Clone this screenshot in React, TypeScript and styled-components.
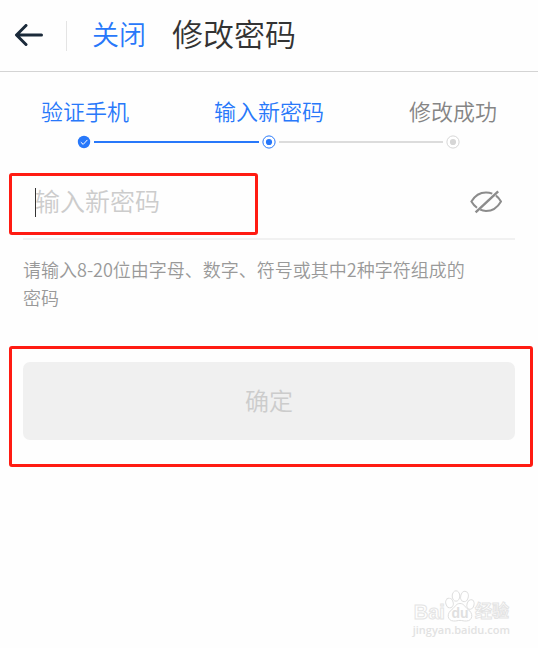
import React, { useState } from "react";
import styled, { createGlobalStyle } from "styled-components";

const BLUE = "#2878fa";

const GlobalStyle = createGlobalStyle`
  *, *::before, *::after { box-sizing: border-box; }
  body {
    margin: 0;
    background: #fefefe;
    font-family: Roboto, "Noto Sans CJK SC", sans-serif;
    font-weight: 350;
  }
  button, input { font: inherit; }
`;

const Page = styled.div`
  min-height: 100vh;
  display: flex;
  flex-direction: column;
`;

const Header = styled.header`
  display: flex;
  align-items: center;
  height: 72px;
  padding-left: 14px;
  border-bottom: 1px solid #d4d4d4;
`;

const PlainButton = styled.button`
  display: flex;
  padding: 0;
  border: 0;
  background: none;
  cursor: pointer;
`;

const Divider = styled.span`
  width: 1px;
  height: 30px;
  margin: 0 25px 0 22px;
  background: #e4e4e4;
`;

const CloseButton = styled(PlainButton)`
  color: ${BLUE};
  font-size: 27px;
  line-height: 40px;
`;

const Title = styled.h1`
  margin: 0 0 0 26px;
  color: #333;
  font-size: 31px;
  font-weight: 350;
  line-height: 40px;
`;

const Labels = styled.ol`
  display: flex;
  justify-content: space-between;
  margin: 0;
  padding: 25px 41px 0;
  list-style: none;
`;

const Label = styled.li<{ $active: boolean }>`
  color: ${(p) => (p.$active ? BLUE : "#858585")};
  font-size: 22px;
  line-height: 32px;
`;

const Track = styled.div`
  display: flex;
  align-items: center;
  gap: 3px;
  padding: 6px 78px 0 77px;
`;

const Line = styled.span<{ $active: boolean }>`
  flex: 1;
  height: 2px;
  background: ${(p) => (p.$active ? BLUE : "#dcdcdc")};
`;

const Form = styled.form`
  display: flex;
  flex-direction: column;
  padding: 24px 23px 0;
`;

const Field = styled.div`
  display: flex;
  align-items: center;
  justify-content: space-between;
  height: 67px;
  padding: 0 13px 7px 12px;
  border-bottom: 2px solid #f1f1f1;
`;

const InputWrap = styled.div`
  position: relative;
  flex: 1;
  display: flex;
  align-items: center;
`;

const Caret = styled.span`
  position: absolute;
  left: 0;
  width: 1px;
  height: 29px;
  background: #333;
`;

const Input = styled.input`
  width: 100%;
  height: 40px;
  padding: 0;
  border: 0;
  outline: 0;
  background: transparent;
  color: #333;
  font-size: 25px;
  caret-color: transparent;
  &::placeholder { color: #ccc; opacity: 1; }
  &:not(:placeholder-shown) { caret-color: #333; }
`;

const Outline = styled.span`
  position: absolute;
  border: 3px solid #ff1b12;
  border-radius: 3px;
  pointer-events: none;
`;

const FieldOutline = styled(Outline)`
  top: -9px;
  bottom: -13px;
  left: -26px;
  width: 249px;
`;

const SubmitOutline = styled(Outline)`
  inset: -16px -18px -27px -14px;
`;

const Hint = styled.p`
  margin: 15px 0 0;
  padding-right: 40px;
  color: #999;
  font-family: "Noto Sans CJK SC", sans-serif;
  font-size: 18px;
  line-height: 28px;
`;

const SubmitArea = styled.div`
  position: relative;
  display: flex;
  margin-top: 51px;
`;

const Submit = styled.button`
  flex: 1;
  height: 78px;
  padding: 0 0 4px;
  border: 0;
  border-radius: 7px;
  background: #f0f0f0;
  color: #ccc;
  font-size: 24px;
`;

const Watermark = styled.footer`
  display: flex;
  flex-direction: column;
  align-items: center;
  align-self: flex-end;
  margin: auto 28px 10px 0;
  color: #fff;
  font-family: "Liberation Sans", "Noto Sans CJK SC", sans-serif;
  font-weight: 700;
  -webkit-text-stroke: 1px #e4e4e4;
`;

const Brand = styled.div`
  display: flex;
  align-items: flex-end;
  font-size: 20px;
  line-height: 20px;
`;

const BrandSmall = styled.span`
  font-size: 17px;
`;

const Site = styled.span`
  font-family: "Open Sans", sans-serif;
  font-size: 11px;
  font-weight: 600;
  line-height: 16px;
  color: #e2e2e2;
  -webkit-text-stroke: 0;
`;

const BackIcon = () => (
  <svg width="30" height="24" viewBox="0 0 30 24" fill="none" stroke="#1b2a3a" strokeWidth="3" strokeLinecap="round" strokeLinejoin="round">
    <path d="M27.5 11H3M12 1.5L2.5 11L12 20.5" />
  </svg>
);

const DoneMarker = () => (
  <svg width="14" height="14" viewBox="0 0 14 14">
    <circle cx="7" cy="7" r="6.2" fill={BLUE} />
    <path d="M3.8 7.2L6.2 9.4L10.4 4.9" fill="none" stroke="#fff" strokeWidth="1" />
  </svg>
);

const DotMarker = ({ color }: { color: string }) => (
  <svg width="14" height="14" viewBox="0 0 14 14">
    <circle cx="7" cy="7" r="6.1" fill="#fff" stroke={color} strokeWidth="1" />
    <circle cx="7" cy="7" r="3.1" fill={color} />
  </svg>
);

const EyeOffIcon = () => (
  <svg width="32" height="24" viewBox="0 0 32 24" fill="none" stroke="#8c8c8c" strokeWidth="2">
    <path d="M22.3 3.6C20.3 2.8 18.2 2.4 16 2.4C10 2.4 4.6 6 1.4 11.4C2.8 13.8 4.7 16 7 17.7" />
    <path d="M26 5.6C28 7.1 29.7 9.1 31 11.4C27.8 17 22.2 20.9 16 20.9C14 20.9 12 20.5 10.2 19.7" />
    <path d="M28.2 1.3L5.6 22.4" strokeWidth="2.4" />
  </svg>
);

const Paw = () => (
  <svg width="30" height="32" viewBox="0 0 30 32" fill="#fff" stroke="#dedede" strokeWidth="1">
    <ellipse cx="4.5" cy="13" rx="3.7" ry="4.9" transform="rotate(-15 4.5 13)" />
    <ellipse cx="11" cy="6" rx="3.8" ry="5.2" />
    <ellipse cx="19.5" cy="6.5" rx="3.8" ry="5.2" transform="rotate(12 19.5 6.5)" />
    <ellipse cx="25.5" cy="14.5" rx="3.5" ry="4.9" transform="rotate(15 25.5 14.5)" />
    <path d="M15 13.5C11 13.5 10 17 7 19.5C1.5 23 2 30.7 8.5 31C11.5 31.2 12.5 30.4 15 30.4C17.5 30.4 18.5 31.2 21.5 31C28 30.7 28.5 23 23 19.5C20 17 19 13.5 15 13.5Z" />
    <text x="15" y="28" textAnchor="middle" fontSize="14" fill="#e0e0e0" stroke="none">du</text>
  </svg>
);

const steps = ["验证手机", "输入新密码", "修改成功"];

export default function App() {
  const [password, setPassword] = useState("");
  const [visible, setVisible] = useState(false);

  return (
    <Page>
      <GlobalStyle />
      <Header>
        <PlainButton type="button" aria-label="返回"><BackIcon /></PlainButton>
        <Divider />
        <CloseButton type="button">关闭</CloseButton>
        <Title>修改密码</Title>
      </Header>
      <main>
        <Labels>
          {steps.map((step, i) => (
            <Label key={step} $active={i < 2}>{step}</Label>
          ))}
        </Labels>
        <Track aria-hidden="true">
          <DoneMarker />
          <Line $active />
          <DotMarker color={BLUE} />
          <Line $active={false} />
          <DotMarker color="#d6d6d6" />
        </Track>
        <Form onSubmit={(e) => e.preventDefault()}>
          <Field>
            <InputWrap>
              {!password && <Caret />}
              <Input
                type={visible ? "text" : "password"}
                aria-label="输入新密码"
                placeholder="输入新密码"
                value={password}
                onChange={(e) => setPassword(e.target.value)}
              />
              <FieldOutline />
            </InputWrap>
            <PlainButton type="button" aria-label="显示密码" onClick={() => setVisible(!visible)}>
              <EyeOffIcon />
            </PlainButton>
          </Field>
          <Hint>请输入8-20位由字母、数字、符号或其中2种字符组成的密码</Hint>
          <SubmitArea>
            <Submit type="submit" disabled={!password}>确定</Submit>
            <SubmitOutline />
          </SubmitArea>
        </Form>
      </main>
      <Watermark>
        <Brand>
          <span>Bai</span>
          <Paw />
          <BrandSmall>经验</BrandSmall>
        </Brand>
        <Site>jingyan.baidu.com</Site>
      </Watermark>
    </Page>
  );
}
